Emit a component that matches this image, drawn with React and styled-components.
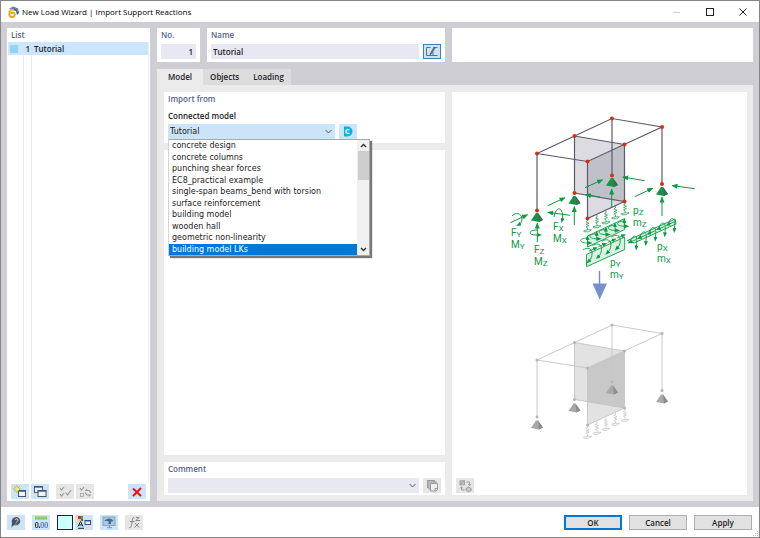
import React, { useState } from 'react';
import styled, { createGlobalStyle } from 'styled-components';

const GlobalStyle = createGlobalStyle`
  * {
    box-sizing: border-box;
  }

  body {
    margin: 0;
    background: #fff;
    color: #1c1c24;
    font-family: "Open Sans", "Noto Sans", sans-serif;
    font-size: 8px;
    line-height: 12px;
  }

  button,
  input,
  select {
    font: inherit;
    color: inherit;
    margin: 0;
    padding: 0;
  }
`;

const Window = styled.div`
  display: flex;
  flex-direction: column;
  min-height: 100vh;
  border: 1px solid #858585;
  background: #fff;
`;

const TitleBar = styled.header`
  display: flex;
  align-items: center;
  height: 21px;
  padding: 0 6px;
`;

const Title = styled.h1`
  flex: 1;
  margin: 0 0 0 3px;
  font-size: 8px;
  font-weight: 400;
  line-height: 14px;
  color: #000;
`;

const WindowButton = styled.button`
  display: flex;
  align-items: center;
  justify-content: center;
  width: 33px;
  height: 21px;
  border: 0;
  background: none;
`;

const WindowButtons = styled.div`
  display: flex;
  margin-right: -6px;
`;

const Workspace = styled.div`
  display: flex;
  flex: 1;
  gap: 7px;
  padding: 6px;
  background: #cfced4;
`;

const Panel = styled.section`
  min-width: 0;
  padding: 1px 4px 3px;
  background: #fff;
`;

const PanelTitle = styled.h2`
  margin: 0;
  font-size: 8px;
  font-weight: 600;
  line-height: 12px;
  color: #56648c;
`;

const ListPanel = styled(Panel)`
  display: flex;
  flex-direction: column;
  width: 143px;
  padding: 1px 1px 2px;

  ${PanelTitle} {
    padding-left: 3px;
  }
`;

const List = styled.ul`
  display: flex;
  flex: 1;
  flex-direction: column;
  margin: 1px 0 3px;
  padding: 0;
  list-style: none;
  background: linear-gradient(#ececf0, #ececf0) 15px 0 / 1px 100% no-repeat,
    linear-gradient(#ececf0, #ececf0) 23px 0 / 1px 100% no-repeat;
  border-right: 1px solid #ececf0;
`;

const ListRow = styled.li`
  display: flex;
  align-items: center;
  height: 13px;
  padding-left: 2px;
  font-weight: 600;
  background: #cce6ff;
`;

const Swatch = styled.span`
  width: 8px;
  height: 8px;
  background: #8ed6f4;
`;

const RowNumber = styled.span`
  width: 12px;
  margin-right: 4px;
  text-align: right;
`;

const Toolbar = styled.div`
  display: flex;
  gap: 2px;
  padding: 0 3px;
`;

const Gap = styled.span`
  width: ${(props) => props.$size || 5}px;
  flex-grow: ${(props) => (props.$grow ? 1 : 0)};
`;

const IconButton = styled.button`
  display: flex;
  flex: none;
  align-items: center;
  justify-content: center;
  width: 18px;
  height: 15px;
  border: ${(props) => (props.$active ? '1px solid #3f7fb5' : '0')};
  background: ${(props) => (props.disabled ? '#e6e6e6' : '#cce4f7')};
`;

const Content = styled.main`
  display: flex;
  flex: 1;
  flex-direction: column;
  min-width: 0;
`;

const HeaderRow = styled.div`
  display: flex;
  gap: 7px;
  height: 34px;
`;

const NumberPanel = styled(Panel)`
  width: 43px;
`;

const NamePanel = styled(Panel)`
  flex: 230;
`;

const EmptyPanel = styled(Panel)`
  flex: 293;
`;

const FieldRow = styled.div`
  display: flex;
  gap: 4px;
  margin-top: 3px;
`;

const TextField = styled.input`
  flex: 1;
  width: 100%;
  min-width: 0;
  height: 15px;
  padding: 0 3px 0 2px;
  border: 0;
  outline: 0;
  font-weight: 600;
  text-align: ${(props) => props.$align || 'left'};
  background: #e8e8f2;
`;

const Tabs = styled.div`
  display: flex;
  margin-top: 7px;
`;

const Tab = styled.button`
  height: 16px;
  padding: 0 ${(props) => (props.$active ? 11 : 7)}px;
  border: 0;
  font-weight: 600;
  background: ${(props) => (props.$active ? '#ebebeb' : '#dcdcdd')};
`;

const TabBody = styled.div`
  display: flex;
  flex: 1;
  gap: 7px;
  padding: 7px 6px 6px 7px;
  background: #ebebeb;
`;

const Column = styled.div`
  display: flex;
  flex: 281;
  flex-direction: column;
  gap: 7px;
  min-width: 0;
`;

const ImportPanel = styled(Panel)`
  height: 51px;
`;

const DetailPanel = styled(Panel)`
  flex: 1;
`;

const CommentPanel = styled(Panel)`
  height: 33px;
`;

const PreviewPanel = styled(Panel)`
  display: flex;
  flex: 287;
  flex-direction: column;
  align-items: flex-start;
  justify-content: space-between;
  padding: 18px 4px 2px;
`;

const Drawing = styled.svg`
  display: block;
  align-self: center;
  width: 200px;
  height: 340px;
`;

const FieldLabel = styled.label`
  display: block;
  margin-top: 6px;
  font-weight: 600;
  line-height: 10px;
`;

const SelectBox = styled.div`
  position: relative;
  flex: ${(props) => (props.$wide ? '1' : '0 1 167px')};
  height: 15px;
`;

const Select = styled.select`
  display: block;
  width: 100%;
  height: 15px;
  padding: 0 16px 0 2px;
  border: 0;
  outline: 0;
  appearance: none;
  font-family: "DejaVu Sans", sans-serif;
  font-size: 8px;
  background: ${(props) => (props.$plain ? '#e8e8f2' : '#cce4f7')};
`;

const Chevron = styled.svg`
  position: absolute;
  top: 5px;
  right: 3px;
  pointer-events: none;
`;

const Popup = styled.div`
  position: absolute;
  z-index: 1;
  top: 15px;
  left: 0;
  display: flex;
  width: 202px;
  height: 117px;
  border: 1px solid #a9a9a9;
  border-left-color: #d4d4d4;
  background: #fff;
  box-shadow: 2px 2px 1px #777;
`;

const Options = styled.ul`
  display: grid;
  flex: 1;
  grid-auto-rows: 1fr;
  margin: 0;
  padding: 0;
  list-style: none;
`;

const Option = styled.li`
  display: flex;
  align-items: center;
  padding: 1px 0 0 3px;
  font-family: "DejaVu Sans", sans-serif;
  font-size: 8px;
  line-height: 10px;
  color: ${(props) => (props.$selected ? '#fff' : '#1c1c24')};
  background: ${(props) => (props.$selected ? '#0078d7' : 'transparent')};
`;

const ScrollBar = styled.div`
  display: flex;
  flex-direction: column;
  align-items: center;
  width: 12px;
  background: #f0f0f0;
`;

const ScrollButton = styled.button`
  display: flex;
  align-items: center;
  justify-content: center;
  width: 12px;
  height: 11px;
  border: 0;
  background: none;
`;

const ScrollThumb = styled.div`
  width: 11px;
  height: 29px;
  margin-bottom: auto;
  background: #cdcdcd;
`;

const Footer = styled.footer`
  display: flex;
  align-items: center;
  gap: 7px;
  height: 30px;
  padding: 0 7px 0 6px;
`;

const ColorButton = styled(IconButton)`
  width: 16px;
  border: 1px solid #222;
  background: #ccffff;
`;

const IconPair = styled.div`
  display: flex;
  gap: 2px;
`;

const DialogButton = styled.button`
  width: 58px;
  height: 15px;
  border: ${(props) => (props.$primary ? '2px solid #0078d7' : '1px solid #adadad')};
  font-weight: 600;
  line-height: 11px;
  background: #e1e1e1;
`;

const Grip = styled.svg`
  position: absolute;
  right: 1px;
  bottom: 1px;
`;

const models = [
  'concrete design',
  'concrete columns',
  'punching shear forces',
  'EC8_practical example',
  'single-span beams_bend with torsion',
  'surface reinforcement',
  'building model',
  'wooden hall',
  'geometric non-linearity',
  'building model LKs',
];

const tabs = ['Model', 'Objects', 'Loading'];

const AppIcon = () => (
  <svg width="12" height="12" viewBox="0 0 12 12">
    <path d="M2 3 L6 0.5 L11 2.5 L12 7 L10 9 L9 5 Z" fill="#3b5f8f" />
    <path d="M3 3 L6 1.6 L10 3 L11 6" stroke="#8fa9c8" strokeWidth="0.7" fill="none" />
    <path d="M7 3.5 C4 3.5 2.3 5.5 2.3 8 C2.3 12 7.8 12 7.8 8.6 C7.8 6.3 5 6 4 7.8" stroke="#e0ae1c" strokeWidth="2" fill="none" />
    <path d="M6 3.5 L3 5 L1 5" stroke="#f0cb55" fill="none" />
  </svg>
);

const EditIcon = () => (
  <svg width="14" height="11" viewBox="0 0 14 11" fill="none" stroke="#44505c">
    <path d="M5.5 1.5 H1.5 V9.5 H12.5" strokeWidth="0.8" />
    <path d="M5 8.5 L9 1 L10.2 1.8 L6.2 8 Z" fill="#8796a5" strokeWidth="0.8" />
    <path d="M8 6 V9 M10 1.5 H12.5" strokeWidth="0.7" />
  </svg>
);

const ModelIcon = () => (
  <svg width="10" height="11" viewBox="0 0 10 11">
    <path d="M1 0.5 H4.5 A5 5 0 0 1 4.5 10.5 H1 Z" fill="#05b4e6" />
    <path d="M6.5 4 L4.7 3.4 L3 4.5 V6.5 L4.7 7.6 L6.5 7" stroke="#fff" strokeWidth="1.2" fill="none" />
  </svg>
);

const NewIcon = () => (
  <svg width="14" height="13" viewBox="0 0 14 13">
    <rect x="5.5" y="5.5" width="7" height="6" fill="#eef5fb" stroke="#4c5662" />
    <path d="M5 6 H13" stroke="#39579a" strokeWidth="1.6" />
    <path d="M4 0 V8 M0 4 H8 M1.2 1.2 L6.8 6.8 M6.8 1.2 L1.2 6.8" stroke="#b9ae1a" strokeWidth="0.9" />
    <circle cx="4" cy="4" r="1.8" fill="#f4ef57" />
  </svg>
);

const CopyIcon = () => (
  <svg width="14" height="13" viewBox="0 0 14 13" fill="#eef5fb" stroke="#4c5662">
    <rect x="1.5" y="1.5" width="8" height="6" />
    <path d="M1 2 H10" stroke="#39579a" strokeWidth="1.4" />
    <rect x="5" y="5.5" width="8" height="6" />
    <path d="M4.5 6 H13.5" stroke="#39579a" strokeWidth="1.4" />
  </svg>
);

const CheckIcon = ({ second }) => (
  <svg width="13" height="12" viewBox="0 0 13 12" fill="none" stroke="#999" strokeWidth="1.1">
    <path d="M1 2 L2.5 4 L5 1" />
    {second ? (
      <>
        <rect x="1.5" y="7.5" width="3" height="3" strokeWidth="0.7" />
        <path d="M6 4.5 H10 L12 7 M7 4.5 L8 3 M12 9 H8 L6 6.5 M11 9 L10 10.5" />
      </>
    ) : (
      <path d="M1 8 L2.5 10 L5 7 M6.5 6.5 L8.5 9 L12 4" />
    )}
  </svg>
);

const DeleteIcon = () => (
  <svg width="10" height="10" viewBox="0 0 10 10">
    <path d="M1 1.5 L9 9 M9 1 L1 9" stroke="#ee1111" strokeWidth="2" />
  </svg>
);

const HelpIcon = () => (
  <svg width="12" height="12" viewBox="0 0 12 12">
    <path d="M6.5 1 A4.5 4.2 0 1 1 4 9 L1.5 11.5 L2 7 A4.5 4.5 0 0 1 6.5 1 Z" fill="#4c535b" />
    <path d="M5 4 C5.5 2.5 8.5 2.6 8 4.4 C7.7 5.3 6.4 5.4 6.2 6.6 M5.9 7.6 V8.6" stroke="#cfe3f4" fill="none" />
  </svg>
);

const UnitsIcon = () => (
  <svg width="14" height="13" viewBox="0 0 14 13">
    <rect x="1" y="0.5" width="12" height="3" fill="#7ac35f" />
    <path d="M3 1 V3 M5 1 V2 M7 1 V3 M9 1 V2 M11 1 V3" stroke="#d1efc5" strokeWidth="0.6" />
    <g fill="none" strokeWidth="1">
      <rect x="1.5" y="6.5" width="2.5" height="5" rx="1" stroke="#222" />
      <path d="M5.5 10.5 V12" stroke="#222" />
      <rect x="7" y="6.5" width="2.5" height="5" rx="1" stroke="#4c74cf" />
      <rect x="11" y="6.5" width="2.5" height="5" rx="1" stroke="#4c74cf" />
    </g>
  </svg>
);

const DisplayIcon = () => (
  <svg width="14" height="13" viewBox="0 0 14 13">
    <rect x="1" y="0" width="3" height="3" fill="#e32525" />
    <rect x="4" y="0" width="2" height="3" fill="#34ae3a" />
    <rect x="1" y="3" width="3" height="2" fill="#f1d52c" />
    <rect x="4" y="3" width="2" height="2" fill="#2c62d2" />
    <path d="M1 10.5 L3.5 5.5 L6 10.5 M2 9 H5 M1 12.3 H7" stroke="#222" fill="none" />
    <rect x="8" y="4.5" width="5.5" height="4" fill="#f7fbff" stroke="#3c4f7f" />
    <path d="M8 5 H13.5" stroke="#39579a" />
  </svg>
);

const ViewIcon = () => (
  <svg width="14" height="13" viewBox="0 0 14 13">
    <rect x="1" y="1" width="12" height="8.5" fill="#a7cbe7" stroke="#7698b5" strokeWidth="0.8" />
    <path d="M2.5 5 C4 1.5 10 1.5 11.5 5 L9 5.5 V8 H6.5 V5 Z" fill="#4c6a88" />
    <path d="M5 11.7 H10 M7.5 9.5 V12" stroke="#7698b5" />
  </svg>
);

const FormulaIcon = () => (
  <svg width="13" height="13" viewBox="0 0 13 13" fill="none" stroke="#858585">
    <path d="M6.5 2 C4.5 0.5 4.5 3 4 6 C3.5 10 3 12.5 1 11.5 M2 5.5 H6.5" />
    <path d="M7 7 L11 11.5 M11 7 L6.5 11.5 M7.5 4.5 H12 M8 1.5 H11 L8.5 4" />
  </svg>
);

const LibraryIcon = () => (
  <svg width="13" height="12" viewBox="0 0 13 12" fill="#d4d4d4" stroke="#999">
    <rect x="1.5" y="0.5" width="7" height="7" />
    <rect x="3" y="2" width="7" height="7" />
    <path d="M4.5 3.5 H11.5 V9.5 L10 11 H4.5 Z" fill="#eee" />
    <path d="M9 11 V8.5 H11.5" />
  </svg>
);

const SwapIcon = () => (
  <svg width="13" height="12" viewBox="0 0 13 12" fill="#c8c8c8" stroke="#999" strokeWidth="0.9">
    <rect x="1" y="0.8" width="4.5" height="4" />
    <path d="M1.5 4.5 L5 1" />
    <path d="M7 8.5 L9.5 7 L12.2 8.5 V10.5 L9.5 11.5 L7 10.5 Z" />
    <path d="M7.5 2 H10.5 V5.5 M9 4 L10.5 5.7 L12 4 M2.5 7 V10 H5.5 M1 8.5 L2.5 6.7 L4 8.5" fill="none" />
  </svg>
);

const ChevronIcon = () => (
  <Chevron width="7" height="6" viewBox="0 0 7 6">
    <path d="M0.5 1 L3.5 4 L6.5 1" stroke="#555" fill="none" />
  </Chevron>
);

const beams = [
  'M537 153.5 L612 118.5 L662 127 L587.5 161.5 Z',
  'M574.5 136 L624.5 144.5',
  'M537 153.5 V210.5',
  'M612 118.5 V175.5',
  'M662 127 V184',
  'M574.5 136 V193 L624.5 201.5 V144.5',
  'M587.5 161.5 V218.5 L624.5 201.5',
];

const joints = [
  [537, 153.5], [574.5, 136], [612, 118.5], [662, 127], [624.5, 144.5], [587.5, 161.5],
  [537, 210.5], [574.5, 193], [612, 175.5], [662, 184], [624.5, 201.5], [587.5, 218.5],
];

const supports = [[537, 211], [574.5, 194], [612, 176], [662, 185]];

const springs = [[587.5, 219], [597, 215], [606, 211], [615.5, 206], [625, 202]];

const forces = [
  [547.7, 205.7, 565, 197.7],
  [510.3, 222.7, 527.7, 214.7],
  [570, 215.3, 547.7, 212.3],
  [537.3, 242, 537.3, 223],
  [574.3, 225, 574.3, 206.5],
  [585, 187.7, 602.7, 179.7],
  [644.7, 180.7, 622.7, 177],
  [611.7, 207.3, 611.7, 189],
  [634.7, 196.7, 652.7, 188.3],
  [694.7, 188.7, 672, 185.5],
  [662, 216, 662, 197],
  [600, 197, 585.5, 194.7],
];

const labels = [
  ['F', 'Y', 511, 236], ['M', 'Y', 511, 248],
  ['F', 'X', 553, 230], ['M', 'X', 553, 242],
  ['F', 'Z', 534, 253], ['M', 'Z', 534, 265],
  ['p', 'Z', 633, 214], ['m', 'Z', 633, 226],
  ['p', 'Y', 610, 266], ['m', 'Y', 610, 278],
  ['p', 'X', 657, 250], ['m', 'X', 657, 262],
];

const springPath = (x, y) =>
  `M${x} ${y} v2 l-1.5 1 l3 1.2 l-3 1.2 l3 1.2 l-3 1.2 l1.5 1 v2 m-4 1 l4 -1 h4 l-3 2 h-4 z`;

const Frame = ({ line, joint, light, dark, width }) => (
  <g>
    <path d="M574.5 136 L624.5 144.5 V201.5 L574.5 193 Z" fill={light} />
    <path d="M587.5 161.5 L624.5 144.5 V201.5 L587.5 218.5 Z" fill={light} />
    <path d="M587.5 161.5 L624.5 144.5 V201.5 L587.5 195.2 Z" fill={dark} />
    {beams.map((d) => (
      <path key={d} d={d} fill="none" stroke={line} strokeWidth={width} />
    ))}
    {joints.map(([x, y]) => (
      <circle key={`${x}-${y}`} cx={x} cy={y} r={joint.r} fill={joint.fill} />
    ))}
  </g>
);

const Support = ({ x, y, fill, shade }) => (
  <g>
    <path d={`M${x - 1} ${y + 2} h2 l5 7 l-4 2 l-8 -1.5 z`} fill={fill} />
    <path d={`M${x + 1} ${y + 2} l5 7 l-4 2 z`} fill={shade} />
  </g>
);

const Preview = () => (
  <Drawing viewBox="500 110 200 340" role="img" aria-label="Support reactions">
    <defs>
      <marker id="head" markerUnits="userSpaceOnUse" markerWidth="7" markerHeight="6" refX="5.5" refY="2.5" orient="auto">
        <path d="M0 0 L6 2.5 L0 5 Z" fill="#0b9a41" />
      </marker>
      <marker id="tip" markerUnits="userSpaceOnUse" markerWidth="6" markerHeight="6" refX="3" refY="2" orient="auto">
        <path d="M0 0 L5 2 L0 4 Z" fill="#0b9a41" />
      </marker>
    </defs>

    <Frame
      line="#5d5a70"
      width="1.2"
      light="rgba(190, 189, 200, 0.55)"
      dark="rgba(150, 150, 165, 0.2)"
      joint={{ r: 2, fill: '#dd2c0a' }}
    />
    {supports.map(([x, y]) => (
      <Support key={x} x={x} y={y} fill="#159447" shade="#3c6f58" />
    ))}

    <g fill="none" stroke="#0b9a41" strokeWidth="1">
      {forces.map(([x1, y1, x2, y2]) => (
        <path key={`${x1}-${y1}`} d={`M${x1} ${y1} L${x2} ${y2}`} markerEnd="url(#head)" />
      ))}
      <path d="M512 216 C515 212 522 213 522 219 C522 222 520 224 518 225" markerEnd="url(#tip)" />
      <path d="M554 217 C555 210 559 207 561 210 C563 213 563 217 562 221" markerEnd="url(#tip)" />
      <path d="M537 230 C528 230 528 235 536 235 H540" markerEnd="url(#tip)" />
      {springs.map(([x, y]) => (
        <path key={x} d={springPath(x, y)} strokeWidth="0.7" />
      ))}
    </g>

    <g fill="rgba(40, 180, 95, 0.18)" stroke="#0b9a41" strokeWidth="0.9">
      <path d="M587.5 236 L624.7 218.5 V229.5 L587.5 247 Z" />
      <path d="M586.5 254.5 L624.7 237 V249.5 L586.5 266.7 Z" />
      <path d="M627.5 240.5 L675 219 L676 224 L634 243 Z" />
    </g>
    <g fill="none" stroke="#0b9a41" strokeWidth="0.9">
      {[0, 1, 2, 3, 4].map((i) => {
        const x = 587.5 + i * 9.2;
        const y = 245 - i * 4.2;
        return (
          <g key={i}>
            <path d={`M${x} ${y} v-8`} markerEnd="url(#tip)" />
            <path d={`M${x} ${y - 7} c-9 0 -9 5 0 5 h3`} markerEnd="url(#tip)" />
          </g>
        );
      })}
      {[0, 1, 2, 3].map((i) => {
        const x = 587 + i * 9.4;
        const y = 250 - i * 4.3;
        return (
          <g key={i}>
            <path d={`M${x - 4} ${y} c4 -3 10 -2 9 4 c0 3 -1 5 -4 8`} markerEnd="url(#tip)" />
            <path d={`M${x + 2} ${y + 1} l7 -3`} markerEnd="url(#tip)" />
          </g>
        );
      })}
      {[0, 1, 2, 3, 4].map((i) => {
        const x = 636.3 + i * 9.5;
        const y = 247.5 - i * 4.4;
        return (
          <g key={i}>
            <path d={`M${x - 6} ${y - 6} c2 -7 7 -7 6.5 0 l-0.5 7`} markerEnd="url(#tip)" />
            <path d={`M${x} ${y - 8} l-7 3`} markerEnd="url(#tip)" />
          </g>
        );
      })}
    </g>

    <g fill="#0b9a41" fontFamily="Roboto, sans-serif" fontSize="10">
      {labels.map(([main, sub, x, y]) => (
        <text key={main + sub} x={x} y={y}>
          {main}
          <tspan dy="1" fontSize="8">{sub}</tspan>
        </text>
      ))}
    </g>

    <path d="M599.5 271 V285" stroke="#6f8bc8" strokeWidth="1.4" />
    <path d="M592.5 283.5 H607 L599.7 299.5 Z" fill="#7690cb" />

    <g transform="translate(0 206.5)">
      <Frame
        line="#c4c4c4"
        width="0.9"
        light="rgba(190, 190, 190, 0.45)"
        dark="rgba(160, 160, 160, 0.2)"
        joint={{ r: 1.5, fill: '#b5b5b5' }}
      />
      {supports.map(([x, y]) => (
        <Support key={x} x={x} y={y + 1} fill="#a8a8a8" shade="#8d8d8d" />
      ))}
      {springs.map(([x, y]) => (
        <path key={x} d={springPath(x, y)} fill="none" stroke="#bdbdbd" strokeWidth="0.7" />
      ))}
    </g>
  </Drawing>
);

const App = () => {
  const [tab, setTab] = useState('Model');
  const [open, setOpen] = useState(true);
  const [hovered, setHovered] = useState('building model LKs');
  const [model, setModel] = useState('Tutorial');

  const toggle = (event) => {
    event.preventDefault();
    setOpen(!open);
  };

  const choose = (name) => {
    setModel(name);
    setOpen(false);
  };

  return (
    <>
      <GlobalStyle />
      <Window>
        <TitleBar>
          <AppIcon />
          <Title>New Load Wizard | Import Support Reactions</Title>
          <WindowButtons>
            <WindowButton aria-label="Minimize" disabled>
              <svg width="8" height="8"><path d="M0 4.5 H7" stroke="#ccc" /></svg>
            </WindowButton>
            <WindowButton aria-label="Maximize">
              <svg width="8" height="8"><rect x="0.5" y="0.5" width="7" height="7" fill="none" stroke="#222" /></svg>
            </WindowButton>
            <WindowButton aria-label="Close">
              <svg width="8" height="8"><path d="M0.5 0.5 L7.5 7.5 M7.5 0.5 L0.5 7.5" stroke="#222" /></svg>
            </WindowButton>
          </WindowButtons>
        </TitleBar>

        <Workspace>
          <ListPanel>
            <PanelTitle>List</PanelTitle>
            <List>
              <ListRow>
                <Swatch />
                <RowNumber>1</RowNumber>
                Tutorial
              </ListRow>
            </List>
            <Toolbar>
              <IconButton aria-label="New"><NewIcon /></IconButton>
              <IconButton aria-label="Copy"><CopyIcon /></IconButton>
              <Gap $size={3} />
              <IconButton aria-label="Select all" disabled><CheckIcon /></IconButton>
              <IconButton aria-label="Invert selection" disabled><CheckIcon second /></IconButton>
              <Gap $grow />
              <IconButton aria-label="Delete"><DeleteIcon /></IconButton>
            </Toolbar>
          </ListPanel>

          <Content>
            <HeaderRow>
              <NumberPanel>
                <PanelTitle as="label" htmlFor="number">No.</PanelTitle>
                <FieldRow>
                  <TextField id="number" $align="right" defaultValue="1" />
                </FieldRow>
              </NumberPanel>
              <NamePanel>
                <PanelTitle as="label" htmlFor="name">Name</PanelTitle>
                <FieldRow>
                  <TextField id="name" defaultValue="Tutorial" />
                  <IconButton aria-label="Edit name" $active><EditIcon /></IconButton>
                </FieldRow>
              </NamePanel>
              <EmptyPanel />
            </HeaderRow>

            <Tabs role="tablist">
              {tabs.map((name) => (
                <Tab key={name} role="tab" aria-selected={name === tab} $active={name === tab} onClick={() => setTab(name)}>
                  {name}
                </Tab>
              ))}
            </Tabs>
            <TabBody>
              <Column>
                <ImportPanel>
                  <PanelTitle>Import from</PanelTitle>
                  <FieldLabel htmlFor="model">Connected model</FieldLabel>
                  <FieldRow>
                    <SelectBox>
                      <Select id="model" value={model} onMouseDown={toggle} onChange={(e) => choose(e.target.value)}>
                        {['Tutorial', ...models].map((name) => (
                          <option key={name}>{name}</option>
                        ))}
                      </Select>
                      <ChevronIcon />
                      {open && (
                        <Popup>
                          <Options role="listbox" aria-label="Connected model">
                            {models.map((name) => (
                              <Option
                                key={name}
                                role="option"
                                aria-selected={name === hovered}
                                $selected={name === hovered}
                                onMouseEnter={() => setHovered(name)}
                                onClick={() => choose(name)}
                              >
                                {name}
                              </Option>
                            ))}
                          </Options>
                          <ScrollBar>
                            <ScrollButton aria-label="Scroll up">
                              <svg width="7" height="5"><path d="M1 4 L3.5 1.5 L6 4" stroke="#333" strokeWidth="1.4" fill="none" /></svg>
                            </ScrollButton>
                            <ScrollThumb />
                            <ScrollButton aria-label="Scroll down">
                              <svg width="7" height="5"><path d="M1 1 L3.5 3.5 L6 1" stroke="#333" strokeWidth="1.4" fill="none" /></svg>
                            </ScrollButton>
                          </ScrollBar>
                        </Popup>
                      )}
                    </SelectBox>
                    <IconButton aria-label="Open model"><ModelIcon /></IconButton>
                  </FieldRow>
                </ImportPanel>
                <DetailPanel />
                <CommentPanel>
                  <PanelTitle as="label" htmlFor="comment">Comment</PanelTitle>
                  <FieldRow>
                    <SelectBox $wide>
                      <Select id="comment" $plain defaultValue="">
                        <option value="" />
                      </Select>
                      <ChevronIcon />
                    </SelectBox>
                    <IconButton aria-label="Comment library" disabled><LibraryIcon /></IconButton>
                  </FieldRow>
                </CommentPanel>
              </Column>
              <PreviewPanel>
                <Preview />
                <IconButton aria-label="Switch view" disabled><SwapIcon /></IconButton>
              </PreviewPanel>
            </TabBody>
          </Content>
        </Workspace>

        <Footer>
          <IconButton aria-label="Help"><HelpIcon /></IconButton>
          <IconButton aria-label="Units"><UnitsIcon /></IconButton>
          <IconPair>
            <ColorButton aria-label="Color" />
            <IconButton aria-label="Display properties"><DisplayIcon /></IconButton>
          </IconPair>
          <IconButton aria-label="View"><ViewIcon /></IconButton>
          <IconButton aria-label="Formula" disabled><FormulaIcon /></IconButton>
          <Gap $grow />
          <DialogButton $primary>OK</DialogButton>
          <DialogButton>Cancel</DialogButton>
          <DialogButton>Apply</DialogButton>
        </Footer>
      </Window>
      <Grip width="6" height="6" fill="#bbb">
        <path d="M4 0 h1 v1 h-1 z M2 2 h1 v1 h-1 z M4 2 h1 v1 h-1 z M0 4 h1 v1 h-1 z M2 4 h1 v1 h-1 z M4 4 h1 v1 h-1 z" />
      </Grip>
    </>
  );
};

export default App;
